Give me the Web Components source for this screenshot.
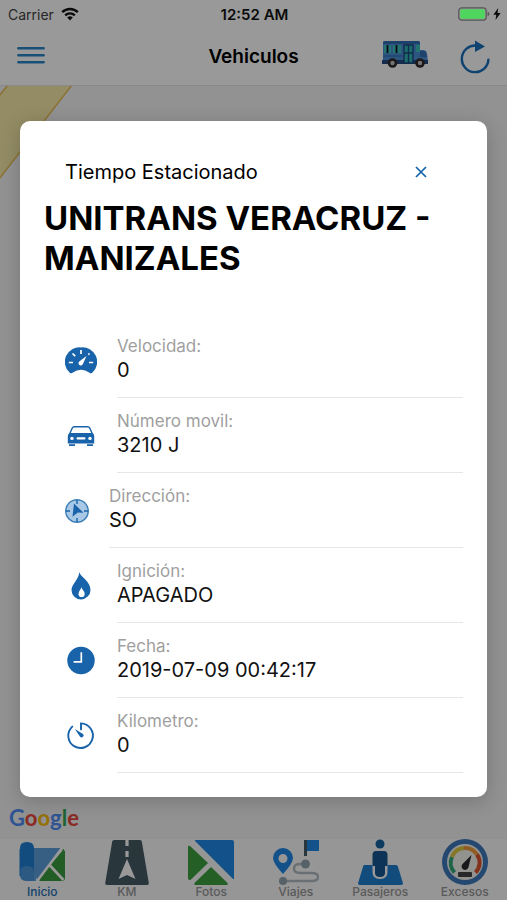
<!DOCTYPE html>
<html lang="es">
<head>
<meta charset="utf-8">
<meta name="viewport" content="width=device-width, initial-scale=1">
<title>Vehiculos</title>
<style>
  body {
    margin: 0;
    font-family: Inter, "Liberation Sans", sans-serif;
    color: #000;
  }
</style>
</head>
<body>
<vehicle-app></vehicle-app>

<script>
const ICONS = {
  wifi: ['0 0 18 14', `
    <g fill="none" stroke="#0b0b0b" stroke-width="2.4">
      <path d="M1.2 5.2a11 11 0 0 1 15.6 0"/>
      <path d="M4.2 8.4a6.8 6.8 0 0 1 9.6 0"/>
    </g>
    <path d="M9 13.4 6.2 10.6a4 4 0 0 1 5.6 0z" fill="#0b0b0b"/>`],
  battery: ['0 0 32 14', `
    <rect x=".8" y=".8" width="27.4" height="12.4" rx="3" fill="none" stroke="#555" stroke-width="1.2"/>
    <rect x="2.2" y="2.2" width="24.6" height="9.6" rx="1.6" fill="#4fd65f"/>
    <path d="M29.6 4.8q1.8.6 1.8 2.2t-1.8 2.2z" fill="#555"/>`],
  bolt: ['0 0 8 12', `<path d="M5.2 0 .4 6.8h2.9L2.5 12l5.1-7H4.5z" fill="#0b0b0b"/>`],
  menu: ['0 0 28 18', `
    <path d="M1.3 2.3h25.4M1.3 9.3h25.4M1.3 16.3h25.4" stroke="#2b85c9" stroke-width="2.4" stroke-linecap="round"/>`],
  refresh: ['0 0 30 34', `
    <path d="M16 5.6a13.3 13.3 0 1 0 12.4 14" fill="none" stroke="#166ebc" stroke-width="2.4" stroke-linecap="round"/>
    <path d="M15 .4 25 6.6 15 12z" fill="#166ebc"/>`],
  bus: ['0 0 46 28', `
    <path d="M3 1h33q2 0 2 2v7h3q3 0 4 3l1 9H1V3q0-2 2-2z" fill="#4a8fd6"/>
    <path d="M1 3q0-2 2-2h33q2 0 2 2v1H1z" fill="#2f6fb5"/>
    <path d="M0 20h46v4H0z" fill="#234a80"/>
    <path d="M2 5h17v8H2z" fill="#3fc0b8"/>
    <path d="M5.5 5v8M14.5 5v8" stroke="#113" stroke-width="1.8"/>
    <path d="M10 5v8" stroke="#4a8fd6" stroke-width="2"/>
    <path d="M22 5h9v18h-9z" fill="#2fb5b5" stroke="#1b487f" stroke-width="1.4"/>
    <path d="M26.5 5v18M22 13h9" stroke="#1b487f" stroke-width="1.4"/>
    <path d="M34 5h4v7h-4z" fill="#3fc0b8"/>
    <path d="M38 11h5l2 6h-7z" fill="#346fb4"/>
    <path d="M1 16h19" stroke="#2f6fb5" stroke-width="1.2"/>
    <g fill="#c2c2c2" stroke="#31292a" stroke-width="2.6">
      <circle cx="10.5" cy="23" r="3.5"/><circle cx="38" cy="23" r="3.5"/>
    </g>`],
  close: ['0 0 12 12', `<path d="m1 1 10 10M11 1 1 11" stroke="#1565ab" stroke-width="1.7"/>`],
  speed: ['0 0 32 32', `
    <path d="M16 2.4A14.6 14.6 0 0 0 4.500 27.600q1.200 1.400 3 .1 8.500-6 17 0 1.800 1.300 3-.1A14.600 14.600 0 0 0 16 2.400z" fill="#1863aa"/>
    <path d="M16 5v4M7.500 8.500l2.700 2.700M3.800 17.500H8M24 17.500h4.200M24.500 8.500l-1.200 1.200" stroke="#fff" stroke-width="1.700"/>
    <path d="m21.500 11-3.700 8.300a2.300 2.300 0 1 1-3.200-3.100z" fill="#fff"/>`],
  car: ['0 0 32 32', `
    <path fill-rule="evenodd" fill="#1863aa" d="M9.400 6h13.200q2 0 2.800 1.800l2.300 5.200q1.500 1.300 1.500 3V23.500H2.800V16q0-1.700 1.500-3l2.300-5.200q.8-1.800 2.800-1.800zM9.200 7.500q-1 0-1.400 1l-2 4.500h20.400l-2-4.500q-.4-1-1.400-1z"/>
    <path d="M4 24.300h6v1.800H4zM22 24.300h6v1.800h-6z" fill="#1863aa"/>
    <circle cx="7" cy="18.400" r="1.700" fill="#fff"/><circle cx="25" cy="18.400" r="1.700" fill="#fff"/>
    <rect x="11.500" y="17.300" width="9" height="2.200" rx="1" fill="#fff"/>`],
  compass: ['0 0 24 24', `
    <circle cx="12" cy="12" r="11.300" fill="#a8c8e6" stroke="#3f80ba" stroke-width="1.400"/>
    <path d="M12 1v4M12 19v4M1 12h4M19 12h4" stroke="#1863aa" stroke-width="1.400"/>
    <path d="m9 4.500 9.500 9.300-5.700-.3-5.300 4.200z" fill="#1863aa"/>`],
  flame: ['0 0 32 32', `
    <path fill-rule="evenodd" fill="#1863aa" d="M14.400 2c.4 4.800 11.100 8.700 11.100 17.900A9.500 9.500 0 0 1 16 29.400a9.500 9.500 0 0 1-9.500-9.400c0-5.600 6.900-9.800 7.900-18zM16.500 17c-.4 2.700-3 3.900-3 6.900a3.100 3.100 0 0 0 6.200 0c0-2.900-2.600-3.900-3.200-6.900z"/>`],
  clock: ['0 0 32 32', `
    <circle cx="16" cy="15.500" r="13.700" fill="#1863aa"/>
    <path d="M16.300 7.300v9.500H8.600" fill="none" stroke="#fff" stroke-width="1.700"/>`],
  timer: ['0 0 32 32', `
    <path d="M7.300 6.600A12.300 12.300 0 1 0 16 3.400v6" fill="none" stroke="#1863aa" stroke-width="1.900" stroke-linecap="round"/>
    <path d="m9.800 8.900 8.200 5a2 2 0 0 1-2.900 2.900z" fill="#1863aa"/>`],
  home: ['0 0 46 46', `
    <path d="M8 9h34L20 42H8z" fill="#5c9fdc"/>
    <path d="M41 10q4-1 5 2v27q0 3-3 3H21l-1.500-2L44 11z" fill="#399b40"/>
    <path d="M43 9 18.500 41.500M30.500 26 44.500 41" stroke="#fff" stroke-width="2.600"/>
    <path d="M43 7h4v7zM17 39v4h3z" fill="#fff"/>
    <path d="M1 9q0-6 7-6t7 6v24H1z" fill="#1f7fd4"/>
    <path d="M1 33q0-6 7-6t7 6v9H8q-7 0-7-6z" fill="#4a94d8"/>
    <path d="M1 10v27" stroke="#1f7fd4"/>`],
  road: ['0 0 46 46', `
    <path d="M10 1h26q1.500 0 1.800 1.500l7 41.500q.2 2-1.800 2H3q-2 0-1.800-2L8.200 2.500Q8.500 1 10 1z" fill="#455a64"/>
    <path d="M23 0v7M23 12v6" stroke="#fff" stroke-width="3.200"/>
    <path d="m23 20 8.500 20L23 36l-8.500 4z" fill="#fff"/>`],
  photos: ['0 0 46 46', `
    <path d="M8 1h36q2 0 2 2v36q0 2-1.500.5L7 2q-1-1 1-1z" fill="#1f88e5"/>
    <path d="M0 8q0-2 2-1l18 17L3 40.500Q0 42 0 39z" fill="#3c9f40"/>
    <path d="M23 28 39.500 44q1 2-1.500 2H8q-2.500 0-1.500-2z" fill="#3c9f40"/>`],
  trips: ['0 0 46 46', `
    <path d="M32 25h-5q-6 0-6 4.500t6 4.500h12q6 0 6 4t-6 4H11" fill="none" stroke="#b0babf" stroke-width="2.400"/>
    <circle cx="32.500" cy="25" r="4.500" fill="#90a4ae"/><circle cx="10" cy="42" r="4" fill="#90a4ae"/>
    <path d="M31 1h3v16h-3z" fill="#455a64"/>
    <path d="M34 1h12v11H34z" fill="#1e88e5"/>
    <path fill-rule="evenodd" d="M10 35Q0 24 0 19a10 10 0 0 1 20 0q0 5-10 16zm0-20a4.500 4.500 0 1 0 0 9 4.500 4.500 0 0 0 0-9z" fill="#1e88e5"/>`],
  people: ['0 0 46 46', `
    <path d="M7 26h11v7l5 7 5-7v-7h11q1.400 0 1.900 1.500l5 16.500q.4 2-1.600 2H2.700q-2 0-1.600-2l5-16.500Q6.500 26 7 26z" fill="#1e7fd0"/>
    <path d="M15.500 24h15v9q0 7-7.500 7t-7.500-7z" fill="#fff"/>
    <circle cx="23" cy="5" r="4.500" fill="#17629f"/>
    <path d="M19 12h8q3.500 0 3.500 4v11h-2.500v7q0 4-5 4t-5-4v-7h-2.500V16q0-4 3.500-4z" fill="#17588f"/>`],
  gauge: ['0 0 46 46', `
    <circle cx="23" cy="23" r="23" fill="#3c79ba"/>
    <circle cx="23" cy="23" r="18" fill="#f3f3ef"/>
    <g fill="none" stroke-width="4">
      <path d="M12.500 33.500A14 14 0 0 1 10 18" stroke="#31a77b"/>
      <path d="M10 18a14 14 0 0 1 12-9" stroke="#ddc840"/>
      <path d="M22 9a14 14 0 0 1 13 6.500" stroke="#f19a38"/>
      <path d="M35 15.500a14 14 0 0 1-1.500 18" stroke="#dc532e"/>
    </g>
    <path d="m29.500 16-3 12a3.500 3.500 0 1 1-6-3z" fill="#29292c"/>
    <rect x="16" y="33" width="14" height="5" rx="1" fill="#444"/>`],
};

/* <app-icon name size> : size is the width, the height follows the view box */
class AppIcon extends HTMLElement {
  connectedCallback() {
    const [viewBox, shape] = ICONS[this.getAttribute('name')];
    const width = this.getAttribute('size');
    this.attachShadow({ mode: 'open' }).innerHTML = `
      <style>
        :host { display: block; flex: none; width: ${width}px; }
        svg { display: block; width: 100%; }
      </style>
      <svg viewBox="${viewBox}" aria-hidden="true">${shape}</svg>`;
  }
}
customElements.define('app-icon', AppIcon);

class StatusBar extends HTMLElement {
  constructor() {
    super();
    this.attachShadow({ mode: 'open' }).innerHTML = `
      <style>
        :host {
          display: grid;
          grid-template-columns: 1fr auto 1fr;
          align-items: center;
          height: 28px;
          padding: 0 6px 0 8px;
          font-size: 14px;
          color: #0b0b0b;
          position: relative;
          z-index: 3;
        }
        div { display: flex; align-items: center; gap: 7px; }
        .carrier { color: #262626; }
        time { font-size: 15px; font-weight: 600; }
        .power { justify-content: flex-end; gap: 3px; }
      </style>
      <div><span class="carrier">Carrier</span><app-icon name="wifi" size="18"></app-icon></div>
      <time>12:52 AM</time>
      <div class="power">
        <app-icon name="battery" size="32"></app-icon>
        <app-icon name="bolt" size="8"></app-icon>
      </div>`;
  }
}
customElements.define('status-bar', StatusBar);

class AppToolbar extends HTMLElement {
  constructor() {
    super();
    this.attachShadow({ mode: 'open' }).innerHTML = `
      <style>
        :host {
          display: grid;
          grid-template-columns: 1fr auto 1fr;
          align-items: center;
          height: 57px;
          padding: 0 17px;
        }
        h1 { margin: 0; font-size: 19px; line-height: 24px; font-weight: 600; }
        button { padding: 0; border: 0; background: none; cursor: pointer; }
        .actions { display: flex; justify-content: flex-end; align-items: center; gap: 32px; }
        .actions button:first-child { padding-bottom: 6px; }
      </style>
      <div><button aria-label="Menu"><app-icon name="menu" size="28"></app-icon></button></div>
      <h1><slot></slot></h1>
      <div class="actions">
        <button aria-label="Bus"><app-icon name="bus" size="46"></app-icon></button>
        <button aria-label="Actualizar"><app-icon name="refresh" size="30"></app-icon></button>
      </div>`;
  }
}
customElements.define('app-toolbar', AppToolbar);

class MapView extends HTMLElement {
  constructor() {
    super();
    this.attachShadow({ mode: 'open' }).innerHTML = `
      <style>
        :host {
          display: flex;
          flex: 1;
          align-items: flex-end;
          background: #f3f3f3;
          border-top: 1px solid #e4e4e4;
          position: relative;
        }
        .road { position: absolute; top: 0; left: 0; }
        .brand { padding: 0 9px 7px; font: 700 22px/28px Lato, sans-serif; }
        .b { color: #4f8df5; }
        .r { color: #e8493c; }
        .y { color: #f7bb10; }
        .g { color: #36a853; }
      </style>
      <svg class="road" width="80" height="100" aria-hidden="true">
        <path d="M-1 10 8 -1H72L-1 93z" fill="#f6eaa7" stroke="#e9bd55" stroke-width="1.500"/>
      </svg>
      <div class="brand"><span class="b">G</span><span class="r">o</span><span class="y">o</span><span class="b">g</span><span class="g">l</span><span class="r">e</span></div>`;
  }
}
customElements.define('map-view', MapView);

class TabItem extends HTMLElement {
  connectedCallback() {
    this.attachShadow({ mode: 'open' }).innerHTML = `
      <style>
        :host { display: block; flex: 1; color: #969696; }
        :host([selected]) { color: #1f70b4; }
        a {
          display: flex;
          flex-direction: column;
          align-items: center;
          color: inherit;
          text-decoration: none;
          font-size: 12px;
          font-weight: 500;
          line-height: 14px;
        }
      </style>
      <a href="#${this.getAttribute('icon')}">
        <app-icon name="${this.getAttribute('icon')}" size="46"></app-icon>
        <slot></slot>
      </a>`;
  }
}
customElements.define('tab-item', TabItem);

class TabBar extends HTMLElement {
  constructor() {
    super();
    this.attachShadow({ mode: 'open' }).innerHTML = `
      <style>
        :host { display: block; background: #fafafa; }
        nav { display: flex; height: 61px; }
      </style>
      <nav><slot></slot></nav>`;
  }
}
customElements.define('tab-bar', TabBar);

class InfoRow extends HTMLElement {
  connectedCallback() {
    const size = this.getAttribute('size') || 32;
    this.attachShadow({ mode: 'open' }).innerHTML = `
      <style>
        :host { display: flex; align-items: center; gap: 20px; }
        dl {
          flex: 1;
          margin: 0;
          padding: 11px 0 14px;
          border-bottom: 1px solid #e6e6e6;
        }
        dt { font-size: 17px; line-height: 24px; color: #9f9f9f; }
        dd { margin: 0; font-size: 20px; line-height: 25px; color: #111; }
      </style>
      <app-icon name="${this.getAttribute('icon')}" size="${size}"></app-icon>
      <dl>
        <dt>${this.getAttribute('label')}</dt>
        <dd><slot></slot></dd>
      </dl>`;
  }
}
customElements.define('info-row', InfoRow);

class InfoDialog extends HTMLElement {
  constructor() {
    super();
    this.attachShadow({ mode: 'open' }).innerHTML = `
      <style>
        :host {
          position: absolute;
          inset: 0;
          z-index: 2;
          padding: 121px 20px 0;
          background: rgba(0, 0, 0, 0.4);
        }
        section {
          padding: 36px 24px 24px;
          border-radius: 10px;
          background: #fff;
          box-shadow: 0 4px 20px rgba(0, 0, 0, 0.2);
        }
        header {
          display: flex;
          align-items: center;
          justify-content: space-between;
          padding: 0 30px 0 21px;
          font-size: 20px;
          line-height: 30px;
        }
        button { padding: 6px; border: 0; background: none; cursor: pointer; }
        h2 { margin: 11px 0 45px; font-size: 33px; line-height: 40px; font-weight: 700; }
        .rows { padding-left: 21px; }
      </style>
      <section role="dialog">
        <header>
          <slot name="title"></slot>
          <button aria-label="Cerrar"><app-icon name="close" size="12"></app-icon></button>
        </header>
        <h2><slot name="vehicle"></slot></h2>
        <div class="rows"><slot></slot></div>
      </section>`;
  }
}
customElements.define('info-dialog', InfoDialog);

class VehicleApp extends HTMLElement {
  constructor() {
    super();
    this.attachShadow({ mode: 'open' }).innerHTML = `
      <style>
        :host {
          display: flex;
          flex-direction: column;
          min-height: 100vh;
          background: #fff;
          position: relative;
        }
      </style>
      <status-bar></status-bar>
      <app-toolbar>Vehiculos</app-toolbar>
      <map-view></map-view>
      <tab-bar>
        <tab-item icon="home" selected>Inicio</tab-item>
        <tab-item icon="road">KM</tab-item>
        <tab-item icon="photos">Fotos</tab-item>
        <tab-item icon="trips">Viajes</tab-item>
        <tab-item icon="people">Pasajeros</tab-item>
        <tab-item icon="gauge">Excesos</tab-item>
      </tab-bar>
      <info-dialog>
        <span slot="title">Tiempo Estacionado</span>
        <span slot="vehicle">UNITRANS VERACRUZ - MANIZALES</span>
        <info-row icon="speed" label="Velocidad:">0</info-row>
        <info-row icon="car" label="Número movil:">3210 J</info-row>
        <info-row icon="compass" size="24" label="Dirección:">SO</info-row>
        <info-row icon="flame" label="Ignición:">APAGADO</info-row>
        <info-row icon="clock" label="Fecha:">2019-07-09 00:42:17</info-row>
        <info-row icon="timer" label="Kilometro:">0</info-row>
      </info-dialog>`;
  }
}
customElements.define('vehicle-app', VehicleApp);
</script>
</body>
</html>
